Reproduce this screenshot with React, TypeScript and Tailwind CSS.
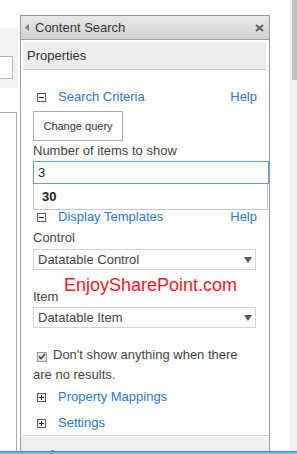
import React from 'react';

const linkColor = 'text-[#2a78d0]';

const ExpandBox: React.FC<{ plus?: boolean }> = ({ plus }) => (
  <span className="relative inline-block w-[9px] h-[9px] border border-[#5a5a5a] bg-white shrink-0">
    <span className="absolute left-[1px] top-[3px] w-[5px] h-px bg-[#222]" />
    {plus && <span className="absolute left-[3px] top-[1px] w-px h-[5px] bg-[#222]" />}
  </span>
);

const SectionRow: React.FC<{ label: string; plus?: boolean; help?: boolean; className?: string }> = ({
  label,
  plus,
  help,
  className = '',
}) => (
  <div className={`h-[18px] flex items-center justify-between ${className}`}>
    <div className="flex items-center">
      <span className="ml-[4px] flex">
        <ExpandBox plus={plus} />
      </span>
      <span className={`ml-[12px] ${linkColor}`}>{label}</span>
    </div>
    {help && <span className={linkColor}>Help</span>}
  </div>
);

const SelectBox: React.FC<{ value: string; className?: string }> = ({ value, className = '' }) => (
  <div
    className={`w-[223px] h-[21px] border border-[#d4d4d4] bg-white flex items-center justify-between pl-[4px] pr-[2px] text-[#444] ${className}`}
  >
    <span>{value}</span>
    <svg width="8" height="6" viewBox="0 0 8 6" className="mr-[1px]">
      <polygon points="0,0 8,0 4,6" fill="#5a5a5a" />
    </svg>
  </div>
);

const App: React.FC = () => {
  return (
    <div className="w-[297px] h-[454px] overflow-hidden bg-white flex flex-col font-['Liberation_Sans',Arial,sans-serif] text-[13px]">
      <div className="h-[451px] flex overflow-hidden">
        {/* page + web part tool pane */}
        <div className="w-[270px] flex flex-col">
          <div className="h-px bg-[#dcdc8c]" />
          <div className="flex flex-1">
            {/* left page fragment */}
            <div className="w-[20px] shrink-0 flex flex-col">
              <div className="mt-[28px] w-[18px] h-[60px] bg-[#f1f1f1] pt-[28px]">
                <div className="w-[13px] h-[23px] border border-l-0 border-[#b5b5b5] bg-white" />
              </div>
              <div className="mt-[24px] w-[17px] flex-1 border-t border-r border-[#a9a9a9]" />
            </div>

            {/* tool pane */}
            <div className="w-[250px] mt-[15px] border-x border-t border-[#9c9c9c] flex flex-col">
              <div className="h-[24px] border-b border-[#9c9c9c] bg-linear-to-b from-[#e9e9e9] to-[#d2d2d2] flex items-center justify-between">
                <div className="flex items-center">
                  <svg width="4" height="7" viewBox="0 0 4 7" className="ml-[4px]">
                    <polygon points="4,0 4,7 0,3.5" fill="#7a7a7a" />
                  </svg>
                  <span className="ml-[6px] text-[13px] text-[#333]">Content Search</span>
                </div>
                <svg width="9" height="8" viewBox="0 0 9 8" className="mr-[5px]">
                  <path d="M1 1 L8 7 M8 1 L1 7" stroke="#5f5f5f" strokeWidth="2" />
                </svg>
              </div>

              <div className="mt-[2px] ml-[2px] mr-[3px] h-[28px] bg-[#ececec] border-b border-[#c4c4c4] flex items-center pl-[4px] text-[13px] text-[#333]">
                Properties
              </div>

              <div className="px-[12px] relative">
                <SectionRow label="Search Criteria" help className="mt-[18px]" />

                <div className="mt-[5px] w-[90px] h-[30px] border border-[#ababab] bg-[#fdfdfd] flex items-center justify-center text-[11px] text-[#333]">
                  Change query
                </div>

                <div className="h-[20px] flex items-center text-[#444]">Number of items to show</div>

                <div className="relative w-[236px]">
                  <div className="h-[23px] border border-[#5b9de3] bg-white flex items-center pl-[4px] text-[#222]">
                    3
                  </div>
                  <div className="absolute left-0 top-full w-[235px] h-[26px] border border-t-0 border-[#c6c6c6] bg-white flex items-center pl-[8px] font-bold text-[#222] z-10">
                    30
                  </div>
                </div>

                <SectionRow label="Display Templates" help className="mt-[24px]" />

                <div className="mt-[3px] h-[18px] flex items-center text-[#444]">Control</div>
                <SelectBox value="Datatable Control" className="mt-[2px]" />

                <div className="mt-[18px] h-[18px] flex items-center text-[#444]">Item</div>
                <SelectBox value="Datatable Item" className="mt-[1px]" />

                <span className="absolute left-[43px] top-[204px] text-[18px] leading-[22px] text-[#ec1c2c] whitespace-nowrap">
                  EnjoySharePoint.com
                </span>

                <p className="mt-[17px] leading-[20px] text-[#444]">
                  <span className="inline-flex items-center justify-center align-[-1px] ml-[4px] mr-[6px] w-[10px] h-[10px] border border-[#9a9a9a] bg-[#e2e2e2]">
                    <svg width="8" height="7" viewBox="0 0 8 7">
                      <path d="M1 3.5 L3 5.5 L7 1" stroke="#444" strokeWidth="1.6" fill="none" />
                    </svg>
                  </span>
                  Don't show anything when there
                  <br />
                  are no results.
                </p>

                <SectionRow label="Property Mappings" plus className="mt-[3px]" />
                <SectionRow label="Settings" plus className="mt-[8px]" />
              </div>

              <div className="mt-[3px] ml-[2px] mr-[1px] h-px bg-[#c4c4c4]" />
              <div className="mt-[1px] flex-1 bg-[#efefef] pt-[9px] pl-[6px]">
                <div className="h-[18px] flex items-center">
                  <ExpandBox plus />
                  <span className={`ml-[12px] ${linkColor}`}>Appearance</span>
                </div>
              </div>
            </div>
          </div>
        </div>

        <div className="w-[20px]" />
        <div className="w-[7px] bg-[#f0f0f0]">
          <div className="ml-[2px] w-[5px] h-[80px] bg-[#c1c1c1]" />
        </div>
      </div>
      <div className="h-[3px] border-t border-[#3d8db3] bg-[#5ec4ea]" />
    </div>
  );
};

export default App;
